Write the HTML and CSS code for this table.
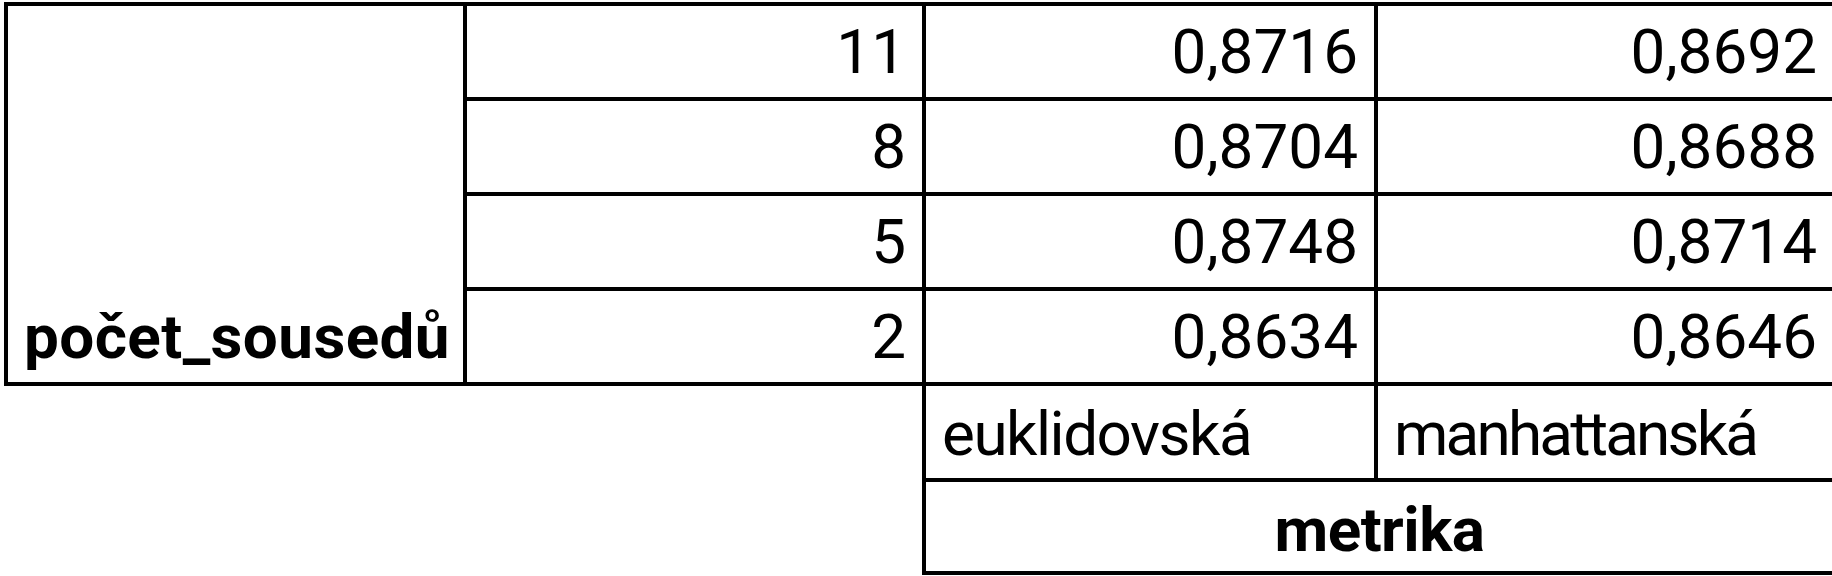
FILE: index.html
```html
<!DOCTYPE html>
<html lang="cs">
<head>
<meta charset="utf-8">
<title>Přesnost podle metriky a počtu sousedů</title>
<link rel="stylesheet" href="styles.css">
</head>
<body>
<table class="grid">
  <colgroup>
    <col class="c-label">
    <col class="c-k">
    <col class="c-euk">
    <col class="c-man">
  </colgroup>
  <tbody>
    <tr class="data-row">
      <th class="row-head" rowspan="4">počet_sousedů</th>
      <td class="num">11</td>
      <td class="num">0,8716</td>
      <td class="num">0,8692</td>
    </tr>
    <tr class="data-row">
      <td class="num">8</td>
      <td class="num">0,8704</td>
      <td class="num">0,8688</td>
    </tr>
    <tr class="data-row">
      <td class="num">5</td>
      <td class="num">0,8748</td>
      <td class="num">0,8714</td>
    </tr>
    <tr class="data-row">
      <td class="num">2</td>
      <td class="num">0,8634</td>
      <td class="num">0,8646</td>
    </tr>
    <tr class="metric-row">
      <td class="blank" colspan="2" rowspan="2"></td>
      <td class="metric metric-euk">euklidovská</td>
      <td class="metric metric-man">manhattanská</td>
    </tr>
    <tr class="caption-row">
      <th class="col-head" colspan="2">metrika</th>
    </tr>
  </tbody>
</table>
</body>
</html>
```
FILE: styles.css
```css
html, body {
  margin: 0;
  padding: 0;
  background: #ffffff;
}

body {
  font-family: Roboto, "Liberation Sans", Arial, sans-serif;
  font-size: 62px;
  color: #000000;
}

.grid {
  border-collapse: collapse;
  table-layout: fixed;
  width: 1829px;
  margin: 2px 0 0 4px;
}

.c-label { width: 459px; }
.c-k { width: 459px; }
.c-euk { width: 452px; }
.c-man { width: 459px; }

.grid th,
.grid td {
  border: 4px solid #000000;
  padding: 9.5px 16px;
  line-height: 72px;
  white-space: nowrap;
  font-weight: 400;
}

.grid .blank {
  border: none;
  padding: 0;
}

.grid .row-head {
  font-weight: 700;
  text-align: left;
  vertical-align: bottom;
  letter-spacing: 0.4px;
}

.grid .num {
  text-align: right;
  vertical-align: middle;
}

.grid .metric {
  text-align: left;
  vertical-align: middle;
  padding-top: 12px;
  padding-bottom: 8px;
}

.grid .metric-euk {
  letter-spacing: -1.5px;
}

.grid .metric-man {
  letter-spacing: -2.8px;
}

.grid .col-head {
  font-weight: 700;
  text-align: center;
  vertical-align: middle;
  padding-top: 12px;
  padding-bottom: 5px;
  letter-spacing: -0.5px;
}
```
